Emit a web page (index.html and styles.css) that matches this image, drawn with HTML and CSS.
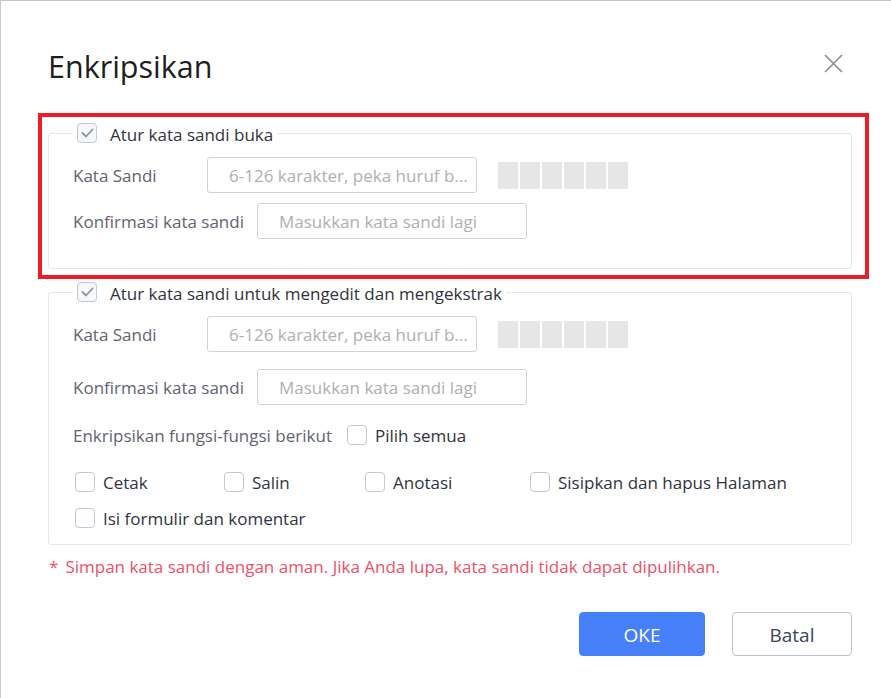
FILE: index.html
```html
<!DOCTYPE html>
<html lang="id">
<head>
<meta charset="utf-8">
<title>Enkripsikan</title>
<link rel="stylesheet" href="styles.css">
</head>
<body>
<div class="dialog">
  <div class="header">
    <h1 class="title">Enkripsikan</h1>
    <button class="close" aria-label="Tutup">
      <svg width="19" height="19" viewBox="0 0 19 19"><path d="M1 1L18 18M18 1L1 18" stroke="#8a8a8a" stroke-width="1.6" fill="none"/></svg>
    </button>
  </div>

  <fieldset class="group group-open">
    <legend class="legend">
      <span class="cb cb-checked"><svg width="13" height="10" viewBox="0 0 13 10"><path d="M1.5 5L5 8.5L11.5 1.5" stroke="#8b93a5" stroke-width="1.8" fill="none" stroke-linecap="round" stroke-linejoin="round"/></svg></span>
      <span class="legend-text">Atur kata sandi buka</span>
    </legend>
    <div class="row">
      <span class="lbl lbl-short">Kata Sandi</span>
      <div class="input">6-126 karakter, peka huruf b...</div>
      <div class="strength"><i></i><i></i><i></i><i></i><i></i><i></i></div>
    </div>
    <div class="row row-gap1">
      <span class="lbl">Konfirmasi kata sandi</span>
      <div class="input input-confirm">Masukkan kata sandi lagi</div>
    </div>
  </fieldset>

  <fieldset class="group group-edit">
    <legend class="legend">
      <span class="cb cb-checked"><svg width="13" height="10" viewBox="0 0 13 10"><path d="M1.5 5L5 8.5L11.5 1.5" stroke="#8b93a5" stroke-width="1.8" fill="none" stroke-linecap="round" stroke-linejoin="round"/></svg></span>
      <span class="legend-text">Atur kata sandi untuk mengedit dan mengekstrak</span>
    </legend>
    <div class="row">
      <span class="lbl lbl-short">Kata Sandi</span>
      <div class="input">6-126 karakter, peka huruf b...</div>
      <div class="strength"><i></i><i></i><i></i><i></i><i></i><i></i></div>
    </div>
    <div class="row row-gap2">
      <span class="lbl">Konfirmasi kata sandi</span>
      <div class="input input-confirm">Masukkan kata sandi lagi</div>
    </div>
    <div class="funcs">
      <span class="lbl">Enkripsikan fungsi-fungsi berikut</span>
      <label class="opt opt-all"><span class="cb"></span><span class="opt-text">Pilih semua</span></label>
    </div>
    <div class="options">
      <label class="opt"><span class="cb"></span><span class="opt-text">Cetak</span></label>
      <label class="opt"><span class="cb"></span><span class="opt-text">Salin</span></label>
      <label class="opt"><span class="cb"></span><span class="opt-text">Anotasi</span></label>
      <label class="opt"><span class="cb"></span><span class="opt-text">Sisipkan dan hapus Halaman</span></label>
      <label class="opt opt-wide"><span class="cb"></span><span class="opt-text">Isi formulir dan komentar</span></label>
    </div>
  </fieldset>

  <p class="warning"><span class="star">*</span>Simpan kata sandi dengan aman. Jika Anda lupa, kata sandi tidak dapat dipulihkan.</p>

  <div class="actions">
    <button class="btn btn-primary">OKE</button>
    <button class="btn btn-default">Batal</button>
  </div>

  <div class="highlight"></div>
</div>
</body>
</html>
```

FILE: styles.css
```css
* { box-sizing: border-box; }
html, body { margin: 0; padding: 0; background: #fff; }
body {
  width: 891px;
  height: 698px;
  overflow: hidden;
  font-family: "Open Sans", "Noto Sans", sans-serif;
  font-size: 17px;
  color: #2f3440;
}
.dialog {
  position: relative;
  width: 891px;
  height: 698px;
  border-left: 1px solid #c8c8c8;
  border-top: 1px solid #c8c8c8;
  padding: 0 0 0 47px;
}
.header {
  display: flex;
  align-items: center;
  justify-content: space-between;
  height: 84px;
  padding-top: 46px;
  width: 797px;
}
.title {
  margin: 0;
  font-size: 30.5px;
  font-weight: 400;
  line-height: 38px;
  color: #1e1e1e;
}
.close {
  border: 0;
  background: none;
  padding: 0;
  width: 19px;
  height: 19px;
  margin-top: -5px;
  margin-right: 2px;
  display: flex;
}
.group {
  margin: 0;
  width: 804px;
  border: 1px solid #e6e6e6;
  border-radius: 3px;
  padding: 14px 0 0 24px;
}
.group-open { margin-top: 38px; padding-bottom: 29px; }
.group-edit { margin-top: 13px; padding-bottom: 16px; }
.legend {
  display: flex;
  align-items: center;
  height: 20px;
  padding: 0 4px;
  margin-left: 0;
}
.legend-text { margin-left: 13px; line-height: 20px; padding-top: 4px; color: #2f3440; }
.cb {
  width: 20px;
  height: 20px;
  border: 1.5px solid #c3c8d6;
  border-radius: 4px;
  display: inline-flex;
  align-items: center;
  justify-content: center;
  flex: none;
  background: #fff;
}
.cb-checked { background: #f6f7f9; }
.row {
  display: flex;
  align-items: center;
  height: 36px;
}
.row-gap1 { margin-top: 10px; }
.row-gap2 { margin-top: 17px; }
.lbl { color: #5f6470; line-height: 20px; padding-top: 2px; }
.lbl-short { width: 134px; }
.input {
  width: 270px;
  height: 36px;
  border: 1px solid #d2d2d2;
  border-radius: 3px;
  padding: 1px 0 0 21px;
  display: flex;
  align-items: center;
  color: #b0b0b0;
  white-space: nowrap;
  overflow: hidden;
}
.input-confirm { margin-left: 13px; }
.strength { display: flex; gap: 2px; margin-left: 21px; }
.strength i { width: 20px; height: 27px; background: #e6e6e6; }
.funcs {
  display: flex;
  align-items: center;
  height: 20px;
  margin-top: 20px;
}
.opt { display: flex; align-items: center; height: 20px; }
.opt-text { margin-left: 8px; color: #2f3440; line-height: 20px; padding-top: 2px; }
.opt-all { margin-left: 15px; }
.options {
  display: grid;
  grid-template-columns: 149px 141px 165px auto;
  row-gap: 16px;
  margin-top: 27px;
  margin-left: 2px;
}
.opt-wide { grid-column: 1 / span 3; }
.warning {
  margin: 12px 0 0 0;
  line-height: 20px;
  color: #f0506a;
}
.star { margin-right: 7px; margin-left: 1px; }
.actions {
  display: flex;
  justify-content: flex-end;
  gap: 27px;
  width: 804px;
  margin-top: 35px;
}
.btn {
  height: 44px;
  border-radius: 4px;
  font-family: inherit;
  font-size: 19px;
  padding: 2px 0 0;
}
.btn-primary {
  width: 126px;
  background: #4680f8;
  border: 1px solid #4680f8;
  color: #fff;
}
.btn-default {
  width: 120px;
  background: #fff;
  border: 1px solid #b8c2d2;
  color: #3c4656;
}
.highlight {
  position: absolute;
  left: 37px;
  top: 112px;
  width: 831px;
  height: 166px;
  border: 4px solid #ee1c25;
  pointer-events: none;
}
```
